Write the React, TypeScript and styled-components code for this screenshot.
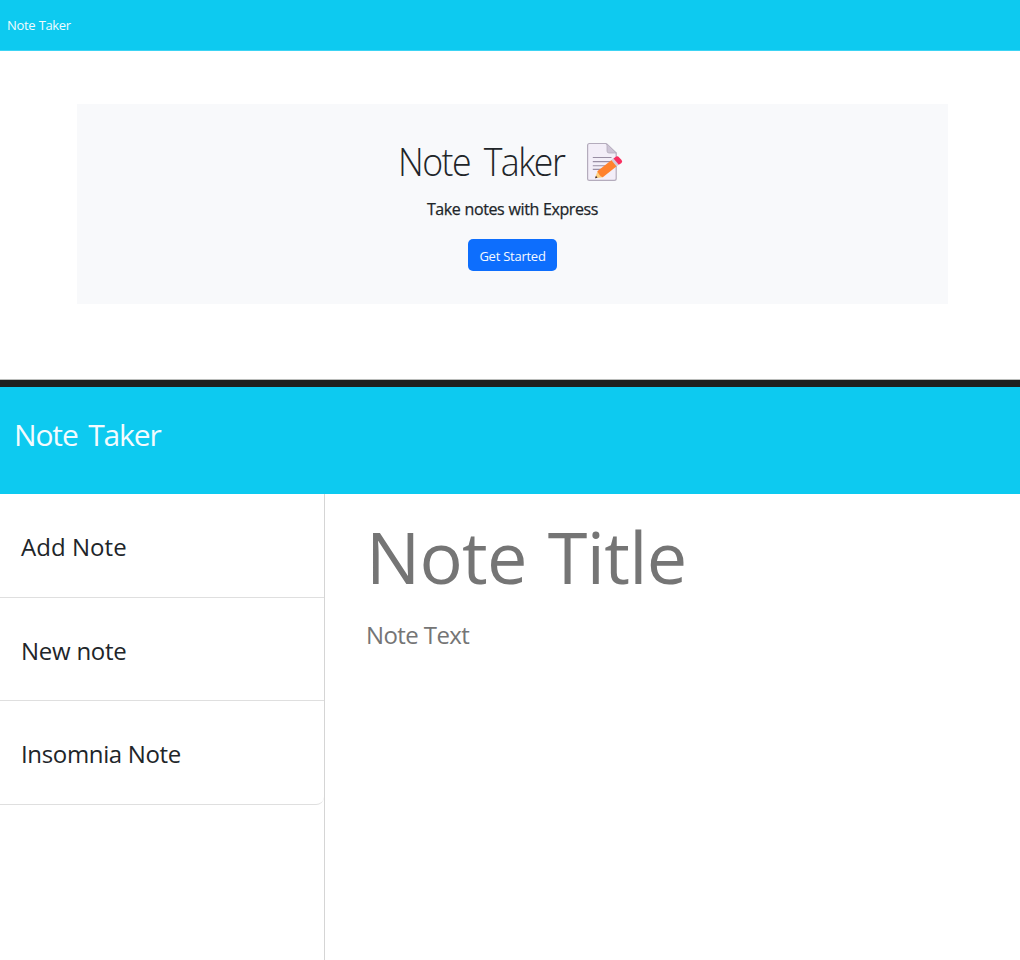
import React from "react";
import styled, { createGlobalStyle } from "styled-components";

const GlobalStyle = createGlobalStyle`
  * { box-sizing: border-box; }
  body {
    margin: 0;
    background: #fff;
    color: #212529;
    font-family: "Segoe UI", "Open Sans", sans-serif;
  }
`;

const Page = styled.div`
  height: 960px;
  overflow: hidden;
  display: flex;
  flex-direction: column;
`;

const Landing = styled.section`
  height: 387px;
  flex: none;
  display: flex;
  flex-direction: column;
  border-bottom: 7px solid #1e201e;
  box-shadow: inset 0 -1px 0 #babcba;
`;

const Navbar = styled.header<{ $large?: boolean }>`
  flex: none;
  height: ${(p) => (p.$large ? "107px" : "51px")};
  padding: ${(p) => (p.$large ? "27px 14px" : "15px 7px")};
  border-bottom: ${(p) => (p.$large ? "0" : "1px solid #3cd4f4")};
  background: #0dcaf0;
`;

const Brand = styled.a<{ $large?: boolean }>`
  display: block;
  color: ${(p) => (p.$large ? "#f3fbfe" : "#f0fbfe")};
  font-size: ${(p) => (p.$large ? "30px" : "13px")};
  line-height: ${(p) => (p.$large ? "42px" : "20px")};
  letter-spacing: ${(p) => (p.$large ? "-1.15px" : "-0.35px")};
  word-spacing: ${(p) => (p.$large ? "4px" : "0.5px")};
  white-space: nowrap;
`;

const Hero = styled.main`
  width: 871px;
  height: 200px;
  margin: 53px 0 0 77px;
  padding-top: 32px;
  display: flex;
  flex-direction: column;
  align-items: center;
  background: #f8f9fb;
`;

const HeroTitle = styled.h1`
  margin: 0;
  height: 50px;
  display: flex;
  align-items: center;
  font-size: 39px;
  font-weight: 300;
  line-height: 50px;
  letter-spacing: -1.7px;
  word-spacing: 6.5px;
  white-space: nowrap;
`;

const TitleLabel = styled.span`
  display: block;
  width: 188px;
  margin-left: 2px;
  transform: scaleX(0.915);
  transform-origin: left center;
`;

const MemoIcon = styled.svg`
  width: 37px;
  height: 40px;
  margin: 2px 7px 0 0;
  flex: none;
`;

const HeroText = styled.h4`
  margin: 12px 0 0;
  font-size: 16px;
  font-weight: 500;
  line-height: 22px;
  letter-spacing: -0.4px;
  word-spacing: 0.4px;
  -webkit-text-stroke: 0.25px currentColor;
`;

const StartButton = styled.button`
  width: 89px;
  height: 32px;
  margin-top: 19px;
  padding: 1px 0 0;
  border: 0;
  border-radius: 5px;
  background: #0d6efd;
  color: #f5f9ff;
  font: 400 13px/20px "Segoe UI", "Open Sans", sans-serif;
  letter-spacing: -0.25px;
`;

const Notes = styled.section`
  flex: 1;
  display: flex;
  flex-direction: column;
`;

const Workspace = styled.div`
  flex: 1;
  display: flex;
`;

const Sidebar = styled.aside`
  width: 325px;
  flex: none;
  border-right: 1px solid #d5d5d5;
`;

const NoteList = styled.ul`
  margin: 0;
  padding: 0;
  list-style: none;
  border-bottom: 1px solid #dfdfdf;
  border-bottom-right-radius: 8px;
`;

const NoteItem = styled.li`
  height: 103px;
  padding: 35px 21px 0;
  font-size: 24px;
  line-height: 36px;
  white-space: nowrap;

  & + & {
    border-top: 1px solid #dfdfdf;
  }

  &:last-child {
    height: 104px;
  }
`;

const ItemLabel = styled.span<{ $spacing: number }>`
  letter-spacing: ${(p) => p.$spacing}px;
`;

const Editor = styled.div`
  padding: 13px 0 0 41px;
  display: flex;
  flex-direction: column;
  color: #757575;
  white-space: nowrap;
`;

const EditorTitle = styled.div`
  font-size: 72px;
  line-height: 98px;
  letter-spacing: -0.7px;
  word-spacing: 3px;
`;

const EditorText = styled.div`
  margin-top: 12px;
  font-size: 24px;
  line-height: 36px;
  letter-spacing: -0.6px;
`;

const notes = [
  { label: "Add Note", spacing: 0.05 },
  { label: "New note", spacing: -0.25 },
  { label: "Insomnia Note", spacing: -0.35 },
];

function Memo() {
  return (
    <MemoIcon viewBox="0 0 37 40" aria-hidden="true">
      <path d="M3.5 1.5H20L30.2 11V36.5Q30.2 38.4 28.3 38.4H3.5Q1.6 38.4 1.6 36.5V3.4Q1.6 1.5 3.5 1.5Z" fill="#f3eef8" stroke="#b4acbc" strokeWidth="1.2" />
      <path d="M21 1.8V9Q21 11 23 11H30.2Z" fill="#cdc4d6" stroke="#b4acbc" strokeWidth=".8" strokeLinejoin="round" />
      <path d="M6.8 15.5H25.5M6.8 19.6H25.5M6.8 23.7H23M6.8 27.4H17" stroke="#998ea4" strokeWidth="1.1" />
      <path d="M9 36.3L11.5 29.2L17 35.3Z" fill="#ffce7c" />
      <path d="M9 36.3L10 33.8L11.5 35.7Z" fill="#402a32" />
      <path d="M11.3 29.2L25.6 17.9L31 24L16.8 35.2Q13.5 34 11.3 29.2Z" fill="#ff822d" />
      <path d="M25.4 18.1L28 16L33 22.4L30.6 24.4Z" fill="#d3cbd8" />
      <path d="M27.5 16.4L29.5 14.9Q31.5 13.6 33.2 15.4L35.6 17.9Q37 19.8 35.2 21.3L32.8 22.8Z" fill="#f92f60" />
    </MemoIcon>
  );
}

export default function App() {
  return (
    <>
      <GlobalStyle />
      <Page>
        <Landing>
          <Navbar>
            <Brand>Note Taker</Brand>
          </Navbar>
          <Hero>
            <HeroTitle>
              <TitleLabel>Note Taker</TitleLabel>
              <Memo />
            </HeroTitle>
            <HeroText>Take notes with Express</HeroText>
            <StartButton>Get Started</StartButton>
          </Hero>
        </Landing>
        <Notes>
          <Navbar $large>
            <Brand $large>Note Taker</Brand>
          </Navbar>
          <Workspace>
            <Sidebar>
              <NoteList>
                {notes.map((note) => (
                  <NoteItem key={note.label}>
                    <ItemLabel $spacing={note.spacing}>{note.label}</ItemLabel>
                  </NoteItem>
                ))}
              </NoteList>
            </Sidebar>
            <Editor>
              <EditorTitle>Note Title</EditorTitle>
              <EditorText>Note Text</EditorText>
            </Editor>
          </Workspace>
        </Notes>
      </Page>
    </>
  );
}
